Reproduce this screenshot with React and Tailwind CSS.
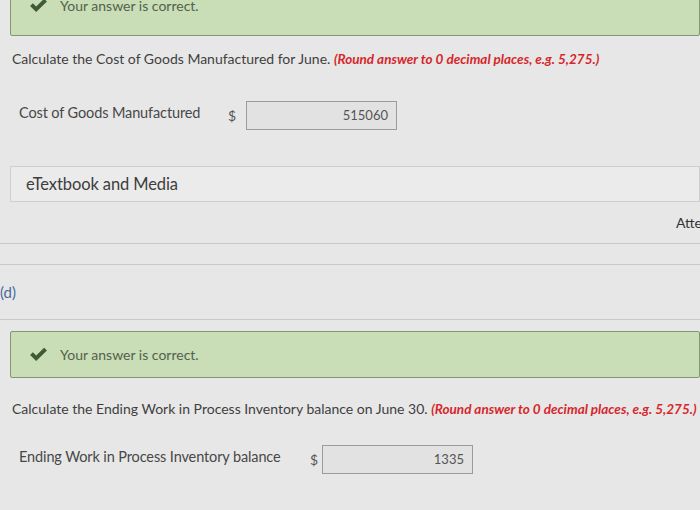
import React from 'react';

const Check = ({ className }) => (
    <svg viewBox="0 0 20 16" className={className} fill="currentColor">
        <path d="M1 8.5 L4 5.5 L7.5 9 L16 0.8 L19 3.8 L7.5 15 Z" />
    </svg>
);

const Correct = ({ className }) => (
    <div className={`ml-[10px] flex items-center border border-[#7f9873] bg-[#c9ddb6] text-[#52624c] rounded-[2px] ${className}`}>
        <Check className="ml-[18px] w-[19px] h-[15px] text-[#3f5a36]" />
        <span className="ml-[12px] text-[14px]">Your answer is correct.</span>
    </div>
);

const Question = ({ text, className }) => (
    <p className={`ml-[12px] whitespace-nowrap text-[14px] leading-[20px] text-[#3f3f3f] ${className}`}>
        {text}{' '}
        <span className="font-bold italic text-[#d6262b] text-[13.5px]">(Round answer to 0 decimal places, e.g. 5,275.)</span>
    </p>
);

const AnswerRow = ({ label, labelWidth, dollarWidth, value, className }) => (
    <div className={`flex items-center ml-[19px] ${className}`}>
        <span className={`text-[14.5px] tracking-[-0.12px] text-[#474747] -mt-[6px] ${labelWidth}`}>{label}</span>
        <span className={`text-[14px] text-[#555] ${dollarWidth}`}>$</span>
        <div className="w-[151px] h-[29px] border border-[#9c9c9c] bg-[#e2e2e2] flex items-center justify-end pr-[8px] text-[13px] text-[#555]">
            {value}
        </div>
    </div>
);

export default function App() {
    return (
        <div className="w-[700px] h-[510px] overflow-hidden bg-[#e7e7e7]" style={{ fontFamily: 'Lato, "Open Sans", sans-serif' }}>
            <Correct className="-mt-[20px] h-[56px] pb-[6px] items-center" />

            <Question className="mt-[13px]" text="Calculate the Cost of Goods Manufactured for June." />

            <AnswerRow className="mt-[32px]" label="Cost of Goods Manufactured" labelWidth="w-[209px]" dollarWidth="w-[18px]" value="515060" />

            <div className="ml-[10px] mt-[36px] h-[36px] flex items-center pl-[15px] border border-[#cfcfcf] bg-[#ebebeb] text-[16.5px] tracking-[-0.1px] text-[#3d3d3d]">
                eTextbook and Media
            </div>

            <div className="h-[41px] flex items-center pl-[676px] whitespace-nowrap text-[14px] text-[#333]">
                Attempts: 1 of 3 used
            </div>
            <div className="border-t border-[#c9c9c9] h-[21px]" />
            <div className="border-t border-[#c9c9c9] h-[55px] flex items-center text-[15px] text-[#4a6aa0]">
                (d)
            </div>
            <div className="border-t border-[#c9c9c9] h-[12px]" />

            <Correct className="h-[47px]" />

            <Question className="mt-[21px]" text="Calculate the Ending Work in Process Inventory balance on June 30." />

            <AnswerRow className="mt-[26px]" label="Ending Work in Process Inventory balance" labelWidth="w-[291px]" dollarWidth="w-[12px]" value="1335" />
        </div>
    );
}
